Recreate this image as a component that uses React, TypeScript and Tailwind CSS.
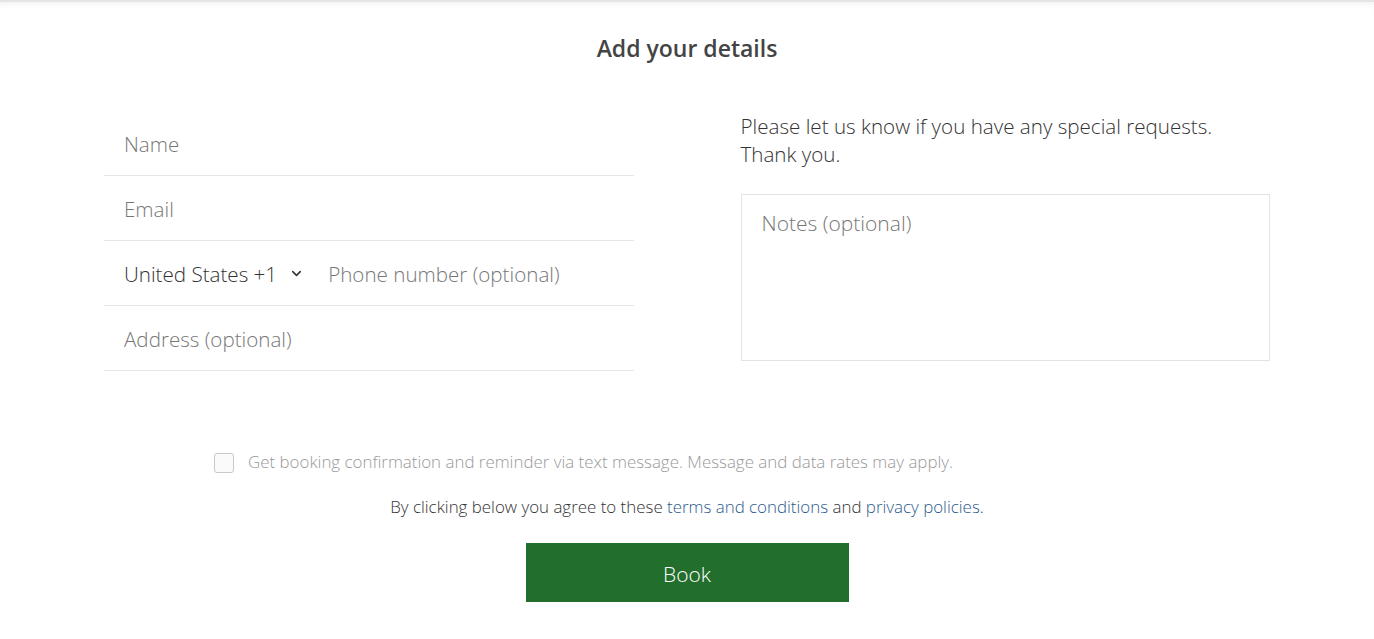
import { ChevronDown } from "lucide-react";

const font = { fontFamily: '"Open Sans", "Noto Sans", sans-serif' };

function Field({ placeholder }: { placeholder: string }) {
  return (
    <div className="h-[65px] border-b border-[#e6e6e6] flex items-center px-5 pt-[3px]">
      <span className="text-[20.6px] font-light text-[#777]">{placeholder}</span>
    </div>
  );
}

export default function App() {
  return (
    <div
      className="w-[1374px] h-[639px] bg-white text-[#333] overflow-hidden border-t-2 border-[#e4e4e4] shadow-[inset_0_6px_8px_-6px_rgba(0,0,0,0.08)]"
      style={font}
    >
      <h1 className="text-center text-[23px] font-semibold text-[#444] mt-[30px] leading-[32px]">
        Add your details
      </h1>

      <div className="flex gap-[107px] px-[104px] mt-[47px]">
        {/* Contact fields */}
        <div className="w-[530px]">
          <Field placeholder="Name" />
          <Field placeholder="Email" />
          <div className="h-[65px] border-b border-[#e6e6e6] flex items-center px-5 pt-[3px] text-[20.6px] font-light">
            <span className="text-[#333]">United States +1</span>
            <ChevronDown size={15} strokeWidth={2.5} className="ml-[12px] mb-[2px] text-[#333]" />
            <span className="ml-[24px] text-[#777]">Phone number (optional)</span>
          </div>
          <Field placeholder="Address (optional)" />
        </div>

        {/* Notes */}
        <div className="w-[530px]">
          <p className="text-[20.6px] font-light leading-[28px] mt-[1px]">
            Please let us know if you have any special requests.
            <br />
            Thank you.
          </p>
          <div className="mt-[26px] h-[167px] border border-[#e3e3e3] px-5 pt-[13px]">
            <span className="text-[21px] font-light text-[#777]">Notes (optional)</span>
          </div>
        </div>
      </div>

      <div className="mt-[78px] flex items-center pl-[214px]">
        <span className="w-5 h-5 rounded-[3px] border border-[#c8c8c8] bg-[#fafafa] mt-[2px]" />
        <span className="ml-[14px] text-[16.9px] font-light text-[#999]">
          Get booking confirmation and reminder via text message. Message and data rates may apply.
        </span>
      </div>

      <p className="mt-[20px] text-center text-[16.9px] font-light text-[#333]">
        By clicking below you agree to these{" "}
        <a className="text-[#2a5b8e]">terms and conditions</a> and{" "}
        <a className="text-[#2a5b8e]">privacy policies</a>.
      </p>

      <div className="flex justify-center mt-[23px]">
        <button className="w-[323px] h-[59px] bg-[#226e2d] text-white text-[21px] font-light pt-[5px]">
          Book
        </button>
      </div>
    </div>
  );
}
